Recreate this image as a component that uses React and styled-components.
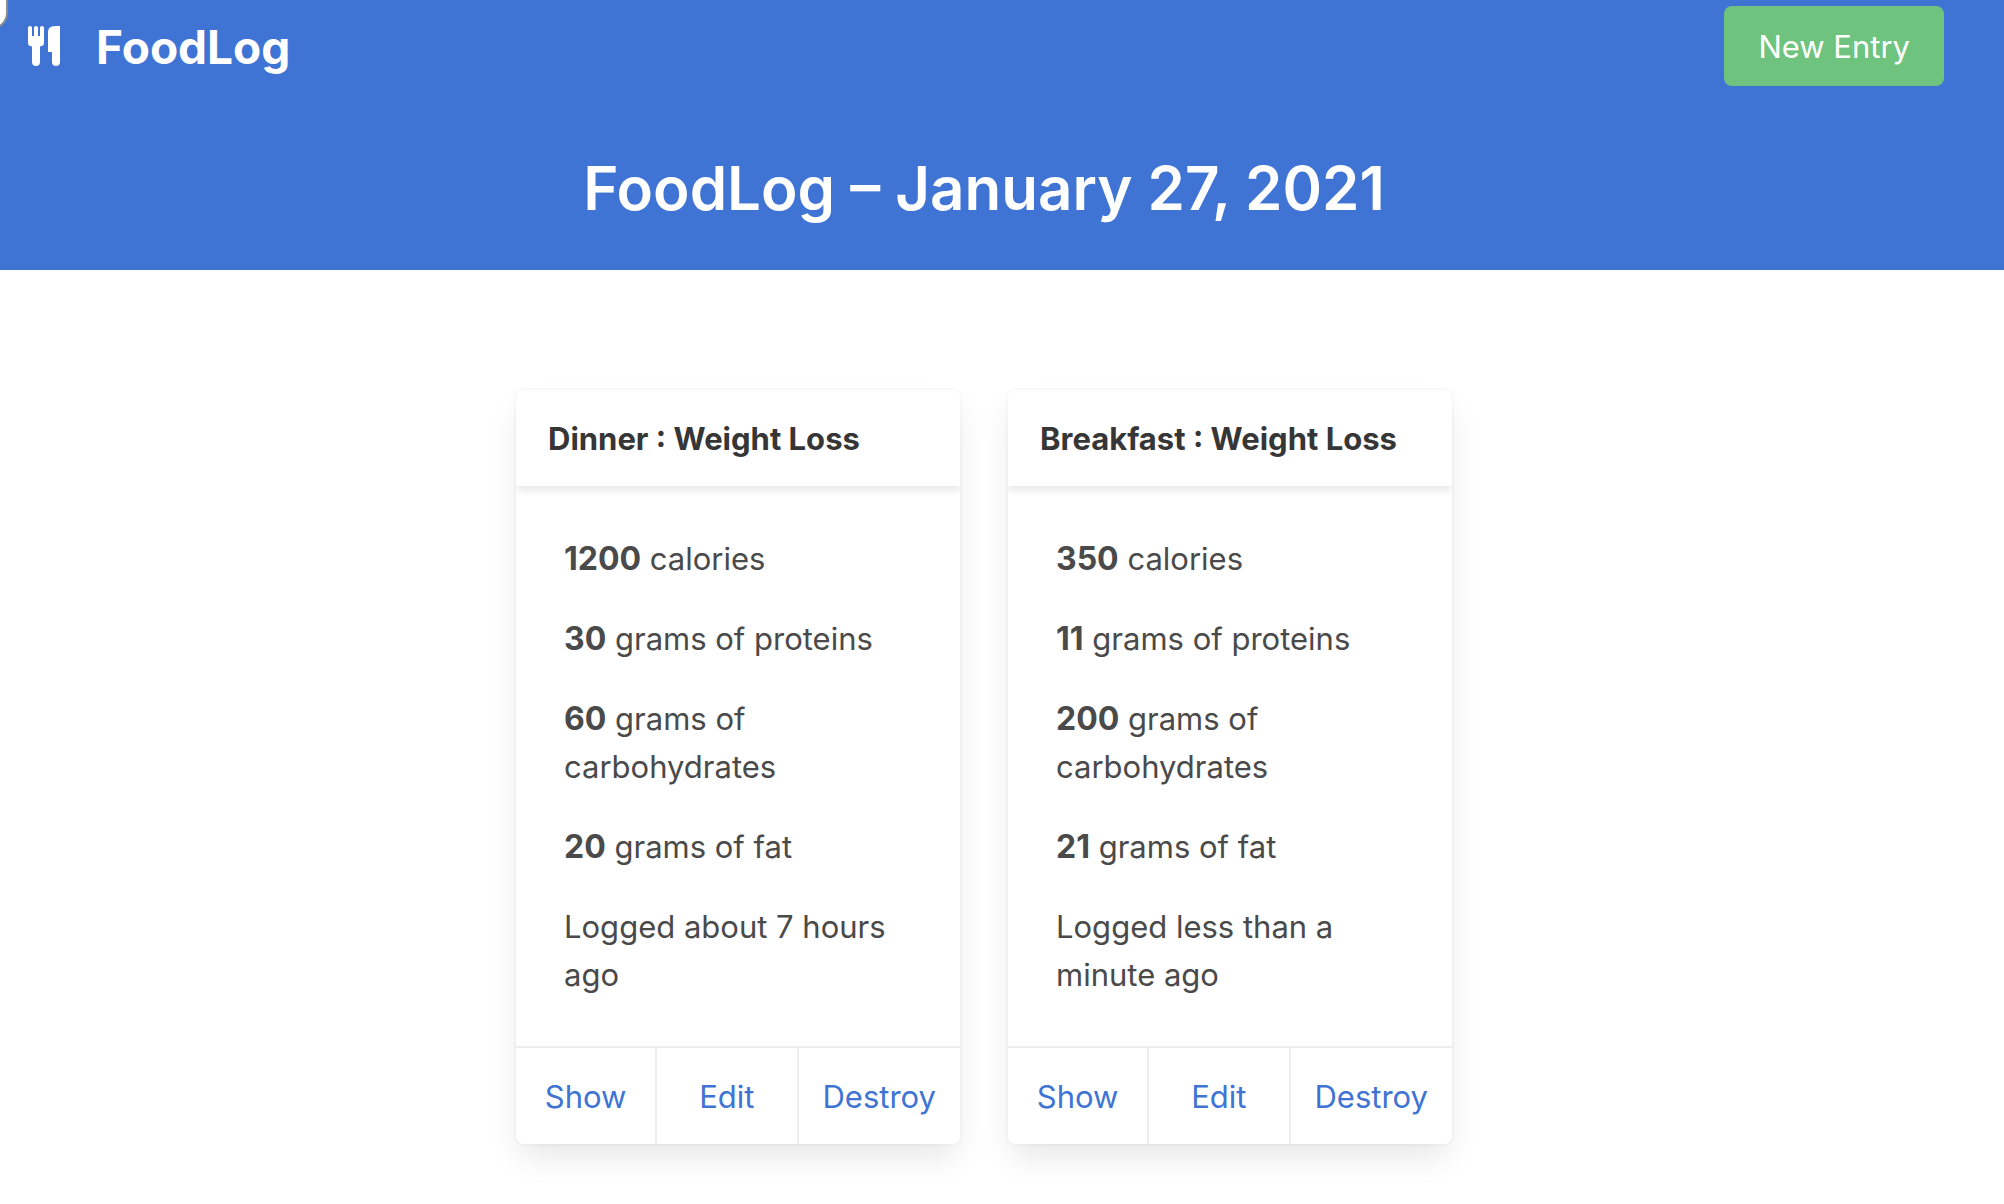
import React from 'react';
import styled, { createGlobalStyle } from 'styled-components';

const blue = '#4074d4';
const line = '#ededed';

const GlobalStyle = createGlobalStyle`
  *, *::before, *::after { box-sizing: border-box; }
  body {
    margin: 0;
    background: #fff;
    color: #4a4a4a;
    font-family: Inter, "Liberation Sans", sans-serif;
    font-size: 31px;
    line-height: 48px;
  }
  h1, h2, p { margin: 0; }
  a { text-decoration: none; }
`;

const Corner = styled.div`
  position: absolute;
  top: -24px;
  left: -24px;
  width: 32px;
  height: 53px;
  background: #fff;
  border: 2px solid #8c8c8c;
  border-radius: 16px;
`;

const Header = styled.header`
  background: ${blue};
  color: #fff;
  padding-right: 36px;
`;

const Nav = styled.nav`
  display: flex;
  align-items: center;
  justify-content: space-between;
  padding: 6px 24px 0 28px;
`;

const Brand = styled.a`
  display: flex;
  align-items: center;
  gap: 36px;
  color: #fff;
  font-size: 46px;
  font-weight: 700;
  line-height: 72px;
`;

const BrandName = styled.span`
  padding-top: 2px;
`;

const NewEntry = styled.button`
  height: 80px;
  padding: 2px 34px 0;
  border: 0;
  border-radius: 8px;
  background: #6ec47e;
  color: #fff;
  font: inherit;
  cursor: pointer;
`;

const Title = styled.h1`
  padding: 66px 24px 46px;
  text-align: center;
  font-size: 60px;
  font-weight: 600;
  line-height: 72px;
`;

const Cards = styled.main`
  display: flex;
  justify-content: center;
  align-items: flex-start;
  gap: 48px;
  padding: 120px 36px 60px 0;
`;

const CardBox = styled.article`
  width: 444px;
  border-radius: 8px;
  background: #fff;
  box-shadow: 0 16px 32px -4px rgba(10, 10, 10, 0.1), 0 0 0 2px rgba(10, 10, 10, 0.02);
`;

const CardHeader = styled.header`
  padding: 25px 32px 23px;
  box-shadow: 0 4px 8px rgba(10, 10, 10, 0.1);
  clip-path: inset(0 0 -16px 0);
`;

const CardTitle = styled.h2`
  color: #363636;
  font-size: 31px;
  font-weight: 700;
  line-height: 48px;
`;

const CardBody = styled.div`
  display: flex;
  flex-direction: column;
  gap: 32px;
  padding: 49px 48px 47px;
`;

const Amount = styled.strong`
  font-size: 32px;
  line-height: 32px;
`;

const CardFooter = styled.footer`
  display: flex;
  border-top: 2px solid ${line};
`;

const Action = styled.a`
  flex: 1 0 0;
  padding: 25px 24px 23px;
  text-align: center;
  color: ${blue};
  & + & { border-left: 2px solid ${line}; }
`;

function Utensils() {
  return (
    <svg width="32" height="40" viewBox="0 0 32 40" fill="#fff" aria-hidden="true">
      <path d="M0 1.5Q0 0 2 0T4 1.5V10H6V1.5Q6 0 8 0T10 1.5V10H12V1.5Q12 0 14 0T16 1.5V17Q16 20 12 20.5V36Q12 40 8 40T4 36V20.5Q0 20 0 17Z" />
      <path d="M20 6Q20 0 27 0H32V36Q32 40 28 40T24 36V26H20Z" />
    </svg>
  );
}

const entries = [
  { meal: 'Dinner', calories: 1200, proteins: 30, carbs: 60, fat: 20, logged: 'about 7 hours' },
  { meal: 'Breakfast', calories: 350, proteins: 11, carbs: 200, fat: 21, logged: 'less than a minute' },
];

function EntryCard({ entry }) {
  return (
    <CardBox>
      <CardHeader>
        <CardTitle>{entry.meal} : Weight Loss</CardTitle>
      </CardHeader>
      <CardBody>
        <p><Amount>{entry.calories}</Amount> calories</p>
        <p><Amount>{entry.proteins}</Amount> grams of proteins</p>
        <p><Amount>{entry.carbs}</Amount> grams of carbohydrates</p>
        <p><Amount>{entry.fat}</Amount> grams of fat</p>
        <p>Logged {entry.logged} ago</p>
      </CardBody>
      <CardFooter>
        <Action href="#show">Show</Action>
        <Action href="#edit">Edit</Action>
        <Action href="#destroy">Destroy</Action>
      </CardFooter>
    </CardBox>
  );
}

export default function App() {
  return (
    <>
      <GlobalStyle />
      <Header>
        <Nav>
          <Brand href="#home">
            <Utensils />
            <BrandName>FoodLog</BrandName>
          </Brand>
          <NewEntry type="button">New Entry</NewEntry>
        </Nav>
        <Title>FoodLog – January 27, 2021</Title>
      </Header>
      <Corner />
      <Cards>
        {entries.map((entry) => (
          <EntryCard key={entry.meal} entry={entry} />
        ))}
      </Cards>
    </>
  );
}
